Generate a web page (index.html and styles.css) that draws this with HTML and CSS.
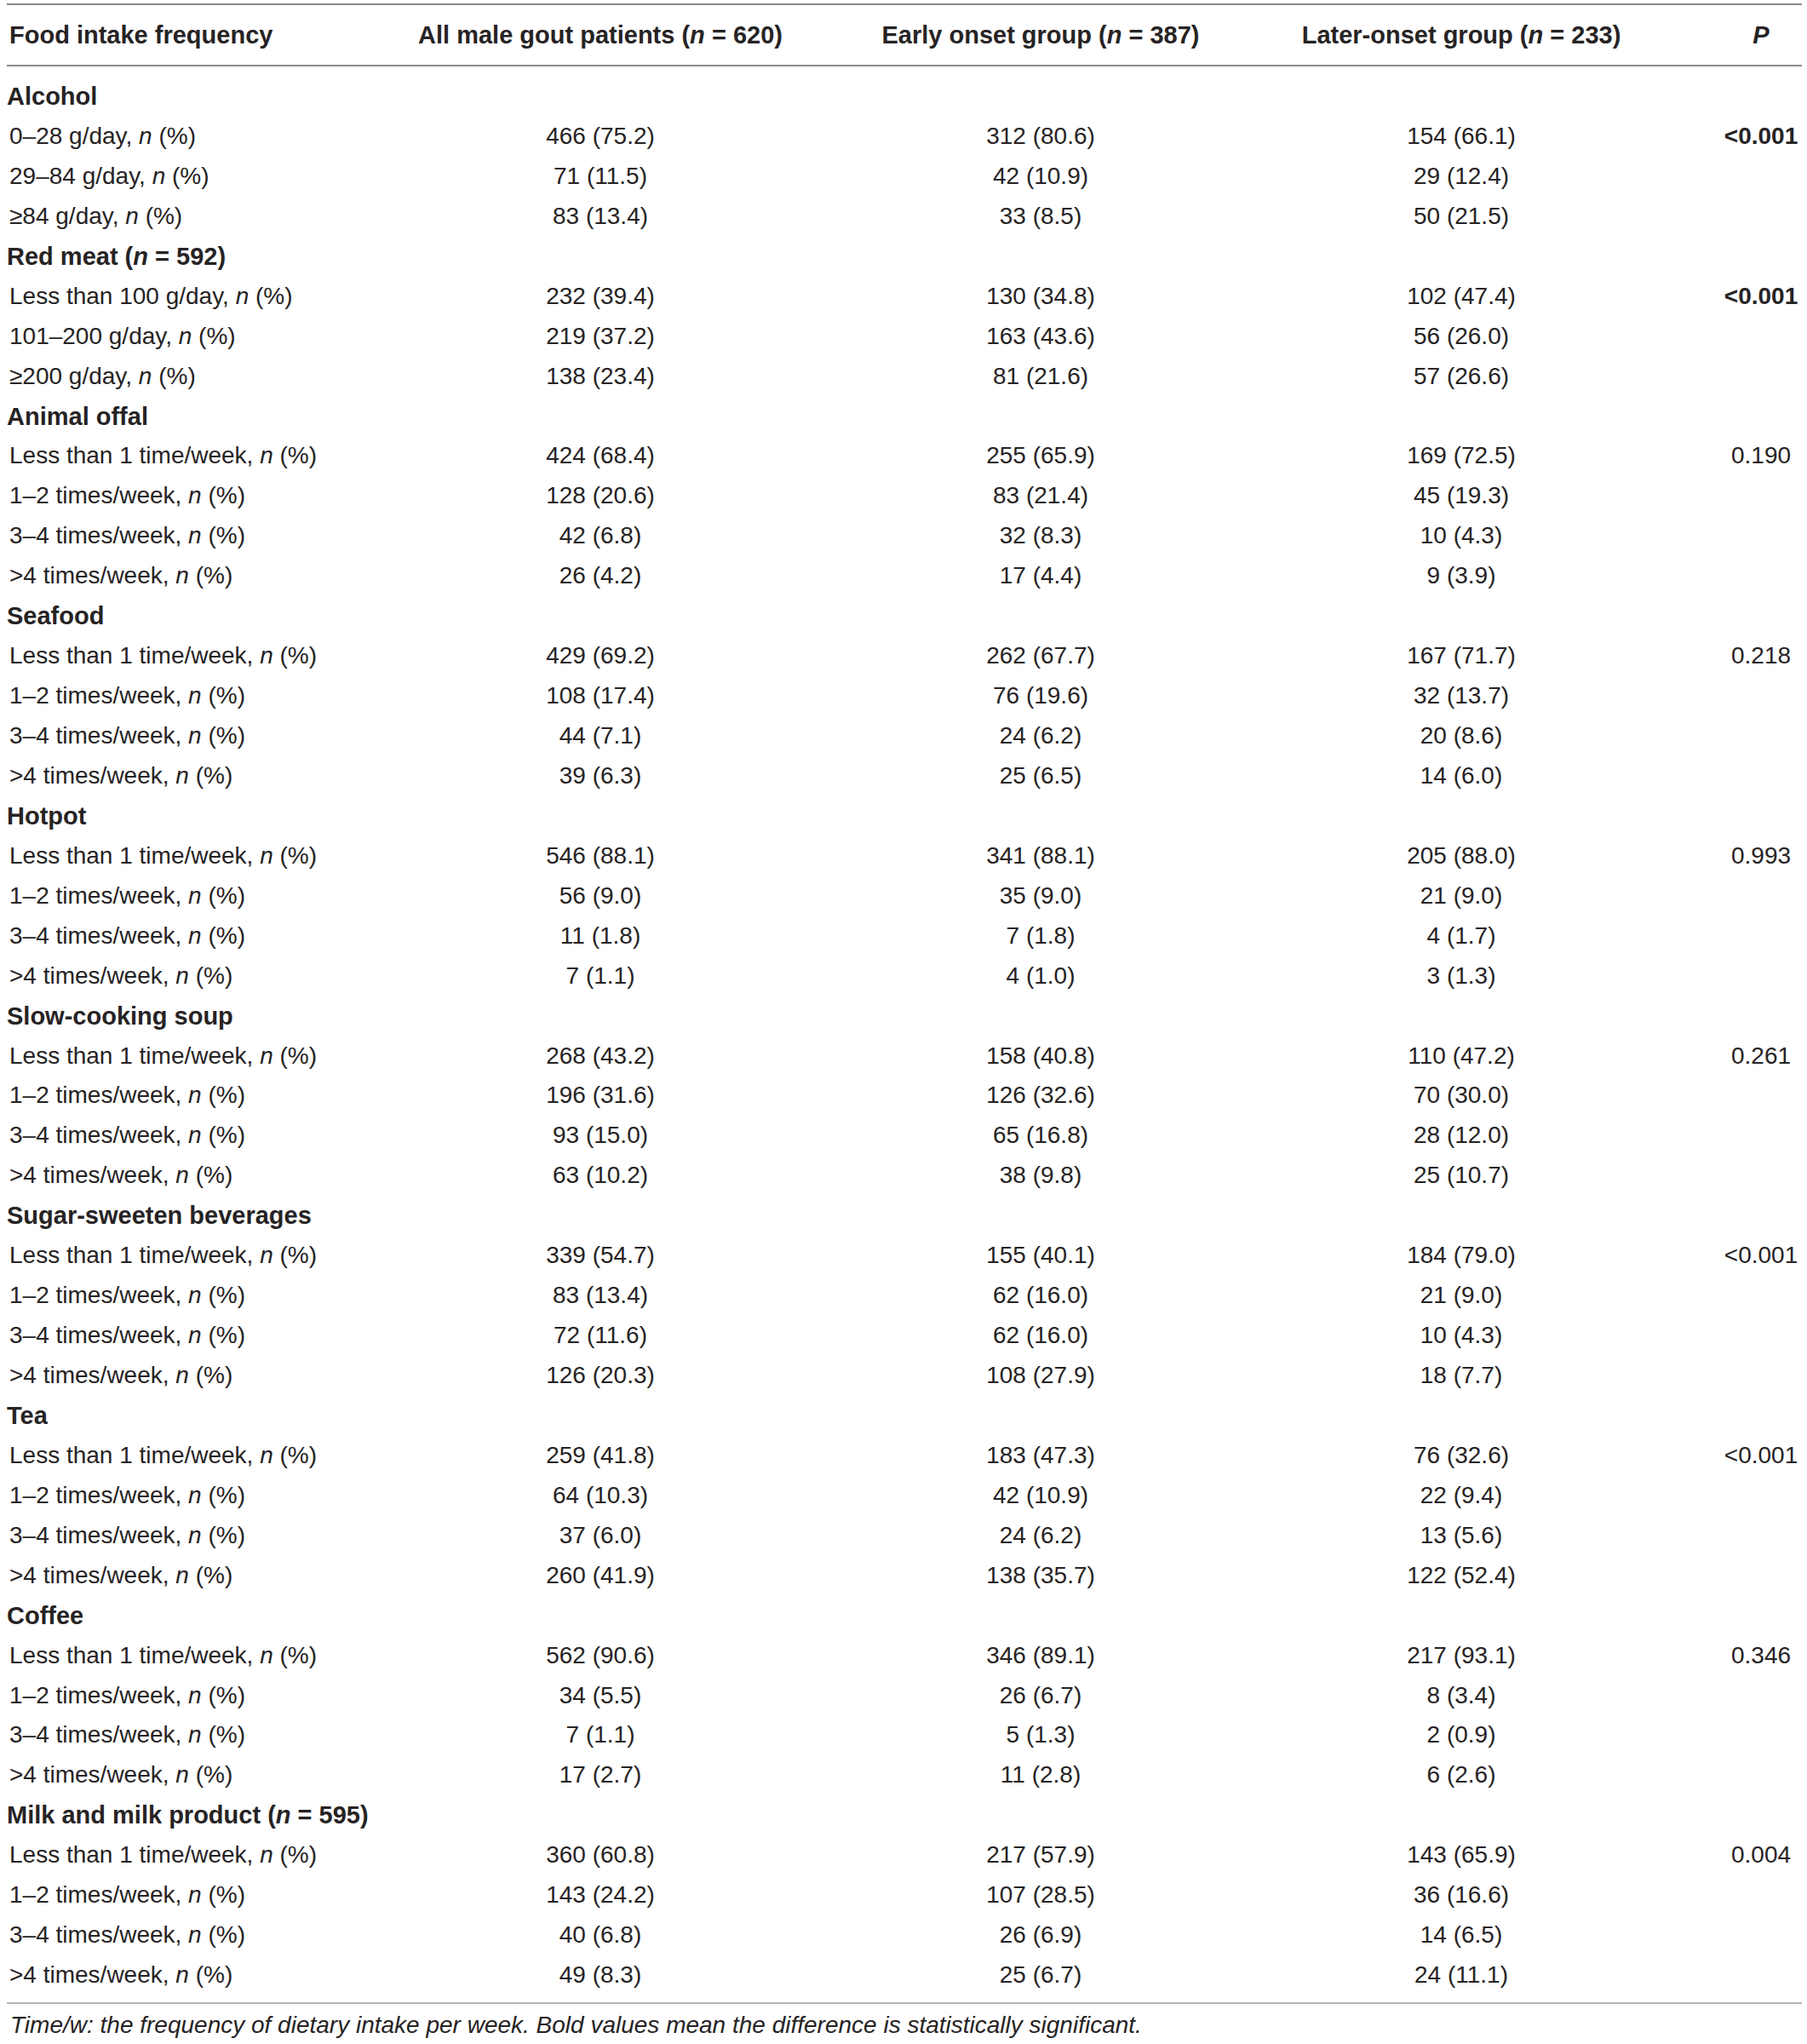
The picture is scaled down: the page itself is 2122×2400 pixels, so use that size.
FILE: index.html
```html
<!DOCTYPE html>
<html lang="en">
<head>
    <meta charset="UTF-8">
    <title>Food intake frequency</title>
    <link rel="stylesheet" href="styles.css">
</head>
<body>
    <div class="wrap">
        <table class="intake">
            <colgroup>
                <col class="c-label">
                <col class="c-all">
                <col class="c-early">
                <col class="c-late">
                <col class="c-p">
            </colgroup>
            <thead>
                <tr>
                    <th class="label">Food intake frequency</th>
                    <th>All male gout patients (<i>n</i> = 620)</th>
                    <th>Early onset group (<i>n</i> = 387)</th>
                    <th>Later-onset group (<i>n</i> = 233)</th>
                    <th><i>P</i></th>
                </tr>
            </thead>
            <tbody>
                <tr class="group first"><td colspan="5">Alcohol</td></tr>
                <tr><td class="label">0–28 g/day, <i>n</i> (%)</td><td>466 (75.2)</td><td>312 (80.6)</td><td>154 (66.1)</td><td><b>&lt;0.001</b></td></tr>
                <tr><td class="label">29–84 g/day, <i>n</i> (%)</td><td>71 (11.5)</td><td>42 (10.9)</td><td>29 (12.4)</td><td></td></tr>
                <tr><td class="label">≥84 g/day, <i>n</i> (%)</td><td>83 (13.4)</td><td>33 (8.5)</td><td>50 (21.5)</td><td></td></tr>

                <tr class="group"><td colspan="5">Red meat (<i>n</i> = 592)</td></tr>
                <tr><td class="label">Less than 100 g/day, <i>n</i> (%)</td><td>232 (39.4)</td><td>130 (34.8)</td><td>102 (47.4)</td><td><b>&lt;0.001</b></td></tr>
                <tr><td class="label">101–200 g/day, <i>n</i> (%)</td><td>219 (37.2)</td><td>163 (43.6)</td><td>56 (26.0)</td><td></td></tr>
                <tr><td class="label">≥200 g/day, <i>n</i> (%)</td><td>138 (23.4)</td><td>81 (21.6)</td><td>57 (26.6)</td><td></td></tr>

                <tr class="group"><td colspan="5">Animal offal</td></tr>
                <tr><td class="label">Less than 1 time/week, <i>n</i> (%)</td><td>424 (68.4)</td><td>255 (65.9)</td><td>169 (72.5)</td><td>0.190</td></tr>
                <tr><td class="label">1–2 times/week, <i>n</i> (%)</td><td>128 (20.6)</td><td>83 (21.4)</td><td>45 (19.3)</td><td></td></tr>
                <tr><td class="label">3–4 times/week, <i>n</i> (%)</td><td>42 (6.8)</td><td>32 (8.3)</td><td>10 (4.3)</td><td></td></tr>
                <tr><td class="label">&gt;4 times/week, <i>n</i> (%)</td><td>26 (4.2)</td><td>17 (4.4)</td><td>9 (3.9)</td><td></td></tr>

                <tr class="group"><td colspan="5">Seafood</td></tr>
                <tr><td class="label">Less than 1 time/week, <i>n</i> (%)</td><td>429 (69.2)</td><td>262 (67.7)</td><td>167 (71.7)</td><td>0.218</td></tr>
                <tr><td class="label">1–2 times/week, <i>n</i> (%)</td><td>108 (17.4)</td><td>76 (19.6)</td><td>32 (13.7)</td><td></td></tr>
                <tr><td class="label">3–4 times/week, <i>n</i> (%)</td><td>44 (7.1)</td><td>24 (6.2)</td><td>20 (8.6)</td><td></td></tr>
                <tr><td class="label">&gt;4 times/week, <i>n</i> (%)</td><td>39 (6.3)</td><td>25 (6.5)</td><td>14 (6.0)</td><td></td></tr>

                <tr class="group"><td colspan="5">Hotpot</td></tr>
                <tr><td class="label">Less than 1 time/week, <i>n</i> (%)</td><td>546 (88.1)</td><td>341 (88.1)</td><td>205 (88.0)</td><td>0.993</td></tr>
                <tr><td class="label">1–2 times/week, <i>n</i> (%)</td><td>56 (9.0)</td><td>35 (9.0)</td><td>21 (9.0)</td><td></td></tr>
                <tr><td class="label">3–4 times/week, <i>n</i> (%)</td><td>11 (1.8)</td><td>7 (1.8)</td><td>4 (1.7)</td><td></td></tr>
                <tr><td class="label">&gt;4 times/week, <i>n</i> (%)</td><td>7 (1.1)</td><td>4 (1.0)</td><td>3 (1.3)</td><td></td></tr>

                <tr class="group"><td colspan="5">Slow-cooking soup</td></tr>
                <tr><td class="label">Less than 1 time/week, <i>n</i> (%)</td><td>268 (43.2)</td><td>158 (40.8)</td><td>110 (47.2)</td><td>0.261</td></tr>
                <tr><td class="label">1–2 times/week, <i>n</i> (%)</td><td>196 (31.6)</td><td>126 (32.6)</td><td>70 (30.0)</td><td></td></tr>
                <tr><td class="label">3–4 times/week, <i>n</i> (%)</td><td>93 (15.0)</td><td>65 (16.8)</td><td>28 (12.0)</td><td></td></tr>
                <tr><td class="label">&gt;4 times/week, <i>n</i> (%)</td><td>63 (10.2)</td><td>38 (9.8)</td><td>25 (10.7)</td><td></td></tr>

                <tr class="group"><td colspan="5">Sugar-sweeten beverages</td></tr>
                <tr><td class="label">Less than 1 time/week, <i>n</i> (%)</td><td>339 (54.7)</td><td>155 (40.1)</td><td>184 (79.0)</td><td>&lt;0.001</td></tr>
                <tr><td class="label">1–2 times/week, <i>n</i> (%)</td><td>83 (13.4)</td><td>62 (16.0)</td><td>21 (9.0)</td><td></td></tr>
                <tr><td class="label">3–4 times/week, <i>n</i> (%)</td><td>72 (11.6)</td><td>62 (16.0)</td><td>10 (4.3)</td><td></td></tr>
                <tr><td class="label">&gt;4 times/week, <i>n</i> (%)</td><td>126 (20.3)</td><td>108 (27.9)</td><td>18 (7.7)</td><td></td></tr>

                <tr class="group"><td colspan="5">Tea</td></tr>
                <tr><td class="label">Less than 1 time/week, <i>n</i> (%)</td><td>259 (41.8)</td><td>183 (47.3)</td><td>76 (32.6)</td><td>&lt;0.001</td></tr>
                <tr><td class="label">1–2 times/week, <i>n</i> (%)</td><td>64 (10.3)</td><td>42 (10.9)</td><td>22 (9.4)</td><td></td></tr>
                <tr><td class="label">3–4 times/week, <i>n</i> (%)</td><td>37 (6.0)</td><td>24 (6.2)</td><td>13 (5.6)</td><td></td></tr>
                <tr><td class="label">&gt;4 times/week, <i>n</i> (%)</td><td>260 (41.9)</td><td>138 (35.7)</td><td>122 (52.4)</td><td></td></tr>

                <tr class="group"><td colspan="5">Coffee</td></tr>
                <tr><td class="label">Less than 1 time/week, <i>n</i> (%)</td><td>562 (90.6)</td><td>346 (89.1)</td><td>217 (93.1)</td><td>0.346</td></tr>
                <tr><td class="label">1–2 times/week, <i>n</i> (%)</td><td>34 (5.5)</td><td>26 (6.7)</td><td>8 (3.4)</td><td></td></tr>
                <tr><td class="label">3–4 times/week, <i>n</i> (%)</td><td>7 (1.1)</td><td>5 (1.3)</td><td>2 (0.9)</td><td></td></tr>
                <tr><td class="label">&gt;4 times/week, <i>n</i> (%)</td><td>17 (2.7)</td><td>11 (2.8)</td><td>6 (2.6)</td><td></td></tr>

                <tr class="group"><td colspan="5">Milk and milk product (<i>n</i> = 595)</td></tr>
                <tr><td class="label">Less than 1 time/week, <i>n</i> (%)</td><td>360 (60.8)</td><td>217 (57.9)</td><td>143 (65.9)</td><td>0.004</td></tr>
                <tr><td class="label">1–2 times/week, <i>n</i> (%)</td><td>143 (24.2)</td><td>107 (28.5)</td><td>36 (16.6)</td><td></td></tr>
                <tr><td class="label">3–4 times/week, <i>n</i> (%)</td><td>40 (6.8)</td><td>26 (6.9)</td><td>14 (6.5)</td><td></td></tr>
                <tr class="last"><td class="label">&gt;4 times/week, <i>n</i> (%)</td><td>49 (8.3)</td><td>25 (6.7)</td><td>24 (11.1)</td><td></td></tr>
            </tbody>
        </table>
        <p class="note">Time/w: the frequency of dietary intake per week. Bold values mean the difference is statistically significant.</p>
    </div>
</body>
</html>
```

FILE: styles.css
```css
body {
    margin: 0;
    background: #fff;
    color: #262324;
    font-family: "Liberation Sans", Arial, sans-serif;
}
.wrap {
    padding: 4px 6px 0 8px;
}

/* Table */
.intake {
    width: 2108px;
    table-layout: fixed;
    border-collapse: collapse;
    font-size: 28px;
}
.c-label { width: 370px; }
.c-all { width: 654px; }
.c-early { width: 380px; }
.c-late { width: 608px; }
.c-p { width: 96px; }

.intake th,
.intake td {
    padding: 0;
    text-align: center;
    white-space: nowrap;
}
.intake thead tr {
    border-top: 2px solid #8c8c8c;
    border-bottom: 2px solid #8c8c8c;
}
.intake th {
    height: 70px;
    font-size: 29px;
    font-weight: bold;
}
.intake td {
    line-height: 46.94px;
}
.intake .label {
    text-align: left;
    padding-left: 3px;
}
.group td {
    text-align: left;
    font-size: 29px;
    font-weight: bold;
}
.first td {
    padding-top: 12px;
}
.last td {
    padding-bottom: 8px;
}
.intake tbody tr.last {
    border-bottom: 2px solid #b4b4b4;
}

.note {
    margin: 7px 0 0 4px;
    font-size: 28px;
    font-style: italic;
    line-height: 36px;
}
```
